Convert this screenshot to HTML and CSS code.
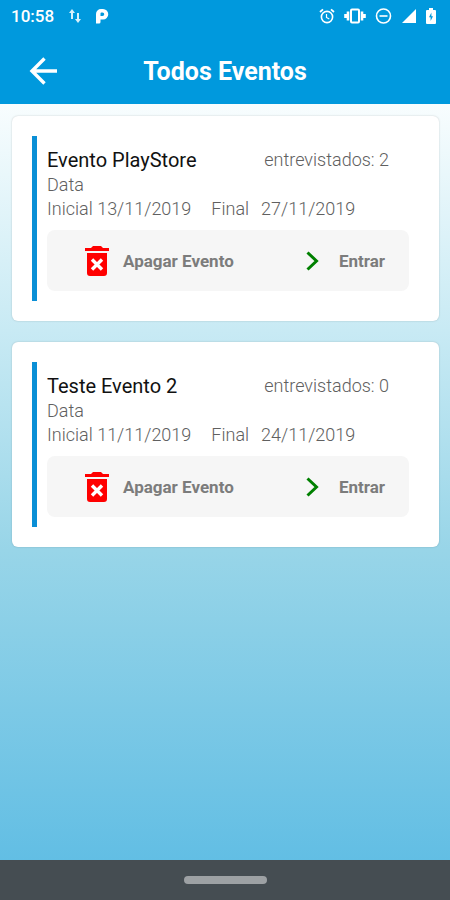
FILE: index.html
```html
<!DOCTYPE html>
<html lang="pt-BR">
<head>
    <meta charset="UTF-8">
    <meta name="viewport" content="width=device-width, initial-scale=1.0">
    <title>Todos Eventos</title>
    <link rel="stylesheet" href="styles.css">
</head>
<body>
    <header class="header">
        <div class="status-bar">
            <span class="clock">10:58</span>
            <svg class="icon-data" width="12" height="16" viewBox="0 0 12 16">
                <path d="M3 1L0 5h2v6h2V5h2zM8 5v6H6l3 4 3-4h-2V5z" fill="#fff" opacity="0.85"/>
            </svg>
            <svg class="icon-app" width="14" height="16" viewBox="0 0 14 16">
                <path d="M1 6a5 5 0 0 1 5-5h2a5 5 0 0 1 0 10.500H5.500V14a1.500 1.500 0 0 1-1.500 1.500H1zM5.500 8H7.500a1.700 1.700 0 0 0 0-3.500h-1a1 1 0 0 0-1 1z" fill="#fff" fill-rule="evenodd"/>
            </svg>
            <div class="status-icons">
                <svg width="16" height="16" viewBox="0 0 16 16" fill="none" stroke="#fff">
                    <circle cx="8" cy="9" r="5.6" stroke-width="1.6"/>
                    <path d="M1 4l3-2.6M15 4l-3-2.6" stroke-width="1.8"/>
                    <path d="M7.500 6v3.400l2.800 1.600" stroke-width="1.2"/>
                </svg>
                <svg width="22" height="16" viewBox="0 0 22 16" fill="none" stroke="#fff">
                    <rect x="7" y="1.500" width="8" height="13" rx="1" stroke-width="2"/>
                    <path d="M4 3.500v9M18 3.500v9M1.500 6v4M20.500 6v4" stroke-width="2.6"/>
                </svg>
                <svg width="17" height="16" viewBox="0 0 17 16" fill="none" stroke="#fff">
                    <circle cx="8.500" cy="8" r="7" stroke-width="1.6"/>
                    <path d="M4.500 8h8" stroke-width="1.6"/>
                </svg>
                <svg width="16" height="16" viewBox="0 0 16 16">
                    <path d="M15 1v14H1z" fill="#fff"/>
                </svg>
                <svg width="10" height="16" viewBox="0 0 10 16">
                    <path d="M3 0h4v2h2a1 1 0 0 1 1 1v12a1 1 0 0 1-1 1H1a1 1 0 0 1-1-1V3a1 1 0 0 1 1-1h2z" fill="#fff"/>
                    <path d="M5.400 4.500L3 9.200h1.600V13L7 8.200H5.400z" fill="#0099dd"/>
                </svg>
            </div>
        </div>
        <div class="app-bar">
            <button type="button" class="back-btn" aria-label="Voltar">
                <svg width="28" height="28" viewBox="0 0 28 28" fill="none" stroke="#fff" stroke-width="3.4">
                    <path d="M28 14H3M15.500 1.500L3 14l12.500 12.500"/>
                </svg>
            </button>
            <h1>Todos Eventos</h1>
        </div>
    </header>

    <main class="event-list">
        <article class="card">
            <div class="card-body">
                <div class="row">
                    <h2>Evento PlayStore</h2>
                    <span class="count">entrevistados: 2</span>
                </div>
                <p>Data</p>
                <p class="dates">
                    <span class="start-date">Inicial 13/11/2019</span>
                    <span>Final</span>
                    <span>27/11/2019</span>
                </p>
                <div class="actions">
                    <button type="button" class="delete-btn">
                        <svg width="24" height="30" viewBox="0 0 24 30">
                            <path d="M0 2h6l2-2h8l2 2h6v3H0zM2 7h20v20a3 3 0 0 1-3 3H5a3 3 0 0 1-3-3z" fill="#ff0000"/>
                            <path d="M7 13.500l10 10M17 13.500l-10 10" stroke="#fff" stroke-width="3.4"/>
                        </svg>
                        Apagar Evento
                    </button>
                    <button type="button" class="enter-btn">
                        <svg width="13" height="20" viewBox="0 0 13 20">
                            <path d="M1.500 1.500L10.500 10l-9 8.500" fill="none" stroke="#008000" stroke-width="3"/>
                        </svg>
                        Entrar
                    </button>
                </div>
            </div>
        </article>

        <article class="card">
            <div class="card-body">
                <div class="row">
                    <h2>Teste Evento 2</h2>
                    <span class="count">entrevistados: 0</span>
                </div>
                <p>Data</p>
                <p class="dates">
                    <span class="start-date">Inicial 11/11/2019</span>
                    <span>Final</span>
                    <span>24/11/2019</span>
                </p>
                <div class="actions">
                    <button type="button" class="delete-btn">
                        <svg width="24" height="30" viewBox="0 0 24 30">
                            <path d="M0 2h6l2-2h8l2 2h6v3H0zM2 7h20v20a3 3 0 0 1-3 3H5a3 3 0 0 1-3-3z" fill="#ff0000"/>
                            <path d="M7 13.500l10 10M17 13.500l-10 10" stroke="#fff" stroke-width="3.4"/>
                        </svg>
                        Apagar Evento
                    </button>
                    <button type="button" class="enter-btn">
                        <svg width="13" height="20" viewBox="0 0 13 20">
                            <path d="M1.500 1.500L10.500 10l-9 8.500" fill="none" stroke="#008000" stroke-width="3"/>
                        </svg>
                        Entrar
                    </button>
                </div>
            </div>
        </article>
    </main>

    <footer class="nav-bar">
        <div class="nav-handle"></div>
    </footer>
</body>
</html>
```
FILE: styles.css
```css
* {
    box-sizing: border-box;
}

body {
    font-family: Roboto, sans-serif;
    margin: 0;
    min-height: 100vh;
    display: flex;
    flex-direction: column;
    color: #606060;
}

h1, h2, p {
    margin: 0;
}

svg {
    display: block;
    flex: none;
}

button {
    font-family: inherit;
    border: none;
    background: none;
    padding: 0;
    cursor: pointer;
}

.header {
    background-color: #0099dd;
    color: #fff;
}

.status-bar {
    display: flex;
    align-items: center;
    height: 32px;
    padding: 0 14px 0 11px;
}

.clock {
    font-size: 17px;
    font-weight: 500;
}

.icon-data {
    margin-left: 15px;
}

.icon-app {
    margin-left: 14px;
}

.status-icons {
    display: flex;
    align-items: center;
    gap: 9px;
    margin-left: auto;
}

.app-bar {
    display: grid;
    grid-template-columns: 57px 1fr 57px;
    align-items: center;
    height: 72px;
    padding-top: 6px;
}

.back-btn {
    justify-self: end;
}

h1 {
    font-size: 25px;
    font-weight: 700;
    text-align: center;
}

.event-list {
    flex: 1;
    display: flex;
    flex-direction: column;
    gap: 21px;
    padding: 12px 11px 20px 12px;
    background: linear-gradient(#f8fdfe, #c8eaf4 30%, #98d5e8 59%, #62bee4);
}

.card {
    padding: 20px 30px 20px 20px;
    background-color: #fff;
    border-radius: 6px;
    box-shadow: 0 0 2px rgba(0, 0, 0, 0.2);
}

.card-body {
    border-left: 5px solid #0a8fd6;
    padding: 11px 0 10px 10px;
}

.row {
    display: flex;
    justify-content: space-between;
    align-items: center;
    height: 26px;
    padding-right: 20px;
}

h2 {
    font-size: 20px;
    font-weight: 400;
    color: #111;
}

.count,
.card p {
    font-size: 18px;
    font-weight: 300;
    line-height: 24px;
}

.dates {
    display: flex;
    gap: 12px;
}

.start-date {
    margin-right: 8px;
}

.actions {
    display: flex;
    justify-content: space-between;
    height: 61px;
    margin-top: 9px;
    padding: 0 24px 0 38px;
    background-color: #f6f6f6;
    border-radius: 8px;
}

.actions button {
    display: flex;
    align-items: center;
    font-size: 17px;
    font-weight: 700;
    color: #7c7c7c;
}

.delete-btn {
    gap: 14px;
}

.enter-btn {
    gap: 20px;
}

.nav-bar {
    display: flex;
    justify-content: center;
    align-items: center;
    height: 40px;
    background-color: #454d52;
}

.nav-handle {
    width: 83px;
    height: 8px;
    border-radius: 4px;
    background-color: #9da1a4;
}
```
